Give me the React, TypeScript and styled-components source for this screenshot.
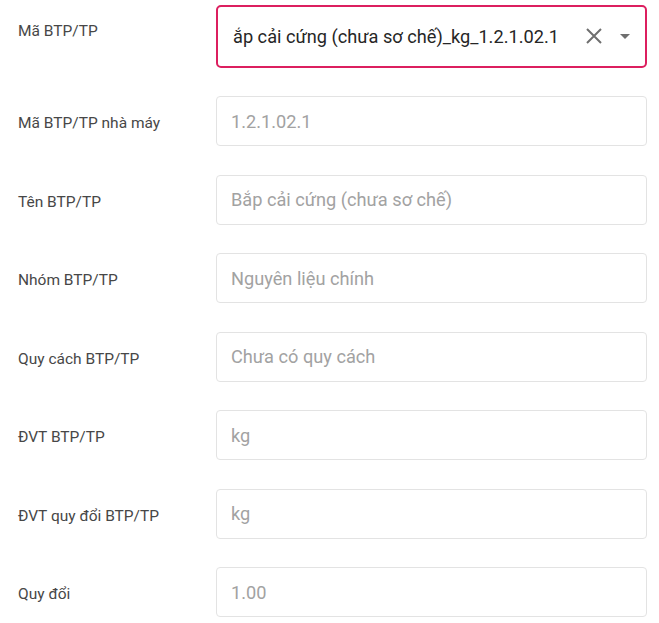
import React from 'react';
import styled, { createGlobalStyle } from 'styled-components';

const GlobalStyle = createGlobalStyle`
  html, body {
    margin: 0;
    padding: 0;
    background: #ffffff;
    font-family: Roboto, "Liberation Sans", Arial, sans-serif;
  }
`;

const Form = styled.div`
  display: flex;
  flex-direction: column;
  gap: 28.5px;
  padding: 5px 12px 6px 18px;
`;

const Row = styled.div`
  display: grid;
  grid-template-columns: 198px 1fr;
  align-items: start;
`;

const Label = styled.div<{ $top: number }>`
  padding-top: ${(p) => p.$top}px;
  font-size: 15.5px;
  line-height: 20px;
  color: #474747;
`;

const Field = styled.div`
  box-sizing: border-box;
  height: 50px;
  border: 1px solid #e3e3e3;
  border-radius: 4px;
  display: flex;
  align-items: center;
  padding: 0 14px;
  font-size: 18.2px;
  color: #a2a2a2;
  white-space: nowrap;
  overflow: hidden;
`;

const Select = styled.div`
  box-sizing: border-box;
  height: 62.5px;
  border: 2px solid #dc1f5f;
  border-radius: 5px;
  display: flex;
  align-items: center;
  padding: 0 14px 0 15px;
  font-size: 18.2px;
  color: #262626;
`;

const Value = styled.div`
  flex: 1;
  white-space: nowrap;
  overflow: hidden;
`;

const Icons = styled.div`
  display: flex;
  align-items: center;
  gap: 16px;
  color: #6f6f6f;
`;

const ClearIcon = () => (
  <svg width="18" height="18" viewBox="0 0 18 18">
    <path d="M2 2 L16 16 M16 2 L2 16" stroke="currentColor" strokeWidth="2" fill="none" />
  </svg>
);

const ArrowIcon = () => (
  <svg width="12" height="8" viewBox="0 0 12 8">
    <path d="M1 2 L11 2 L6 7 Z" fill="currentColor" />
  </svg>
);

const rows = [
  { label: 'Mã BTP/TP nhà máy', value: '1.2.1.02.1' },
  { label: 'Tên BTP/TP', value: 'Bắp cải cứng (chưa sơ chế)' },
  { label: 'Nhóm BTP/TP', value: 'Nguyên liệu chính' },
  { label: 'Quy cách BTP/TP', value: 'Chưa có quy cách' },
  { label: 'ĐVT BTP/TP', value: 'kg' },
  { label: 'ĐVT quy đổi BTP/TP', value: 'kg' },
  { label: 'Quy đổi', value: '1.00' },
];

const App: React.FC = () => {
  return (
    <>
      <GlobalStyle />
      <Form>
        <Row>
          <Label $top={16}>Mã BTP/TP</Label>
          <Select>
            <Value>ắp cải cứng (chưa sơ chế)_kg_1.2.1.02.1</Value>
            <Icons>
              <ClearIcon />
              <ArrowIcon />
            </Icons>
          </Select>
        </Row>
        {rows.map((r) => (
          <Row key={r.label}>
            <Label $top={17}>{r.label}</Label>
            <Field>{r.value}</Field>
          </Row>
        ))}
      </Form>
    </>
  );
};

export default App;
